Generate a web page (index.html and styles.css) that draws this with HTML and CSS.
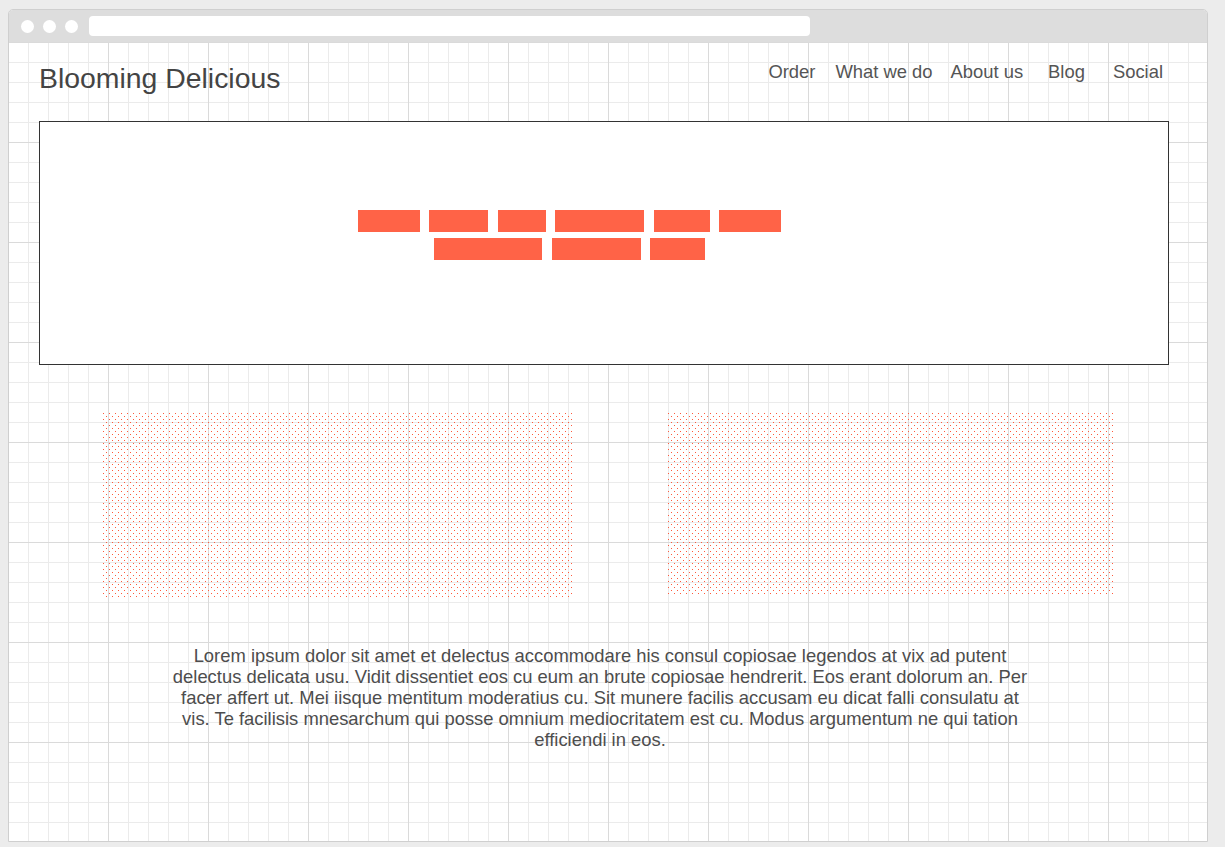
FILE: index.html
```html
<!DOCTYPE html>
<html lang="en">
<head>
<meta charset="utf-8">
<title>Blooming Delicious</title>
<link rel="stylesheet" href="styles.css">
</head>
<body>
<div class="window">
  <div class="chrome">
    <span class="light"></span>
    <span class="light"></span>
    <span class="light"></span>
    <div class="address"></div>
  </div>
  <div class="page">
    <header class="header">
      <h1 class="logo">Blooming Delicious</h1>
      <nav class="nav">
        <a class="nav-link" href="#">Order</a>
        <a class="nav-link" href="#">What we do</a>
        <a class="nav-link nav-about" href="#">About us</a>
        <a class="nav-link nav-blog" href="#">Blog</a>
        <a class="nav-link nav-social" href="#">Social</a>
      </nav>
    </header>

    <section class="hero">
      <div class="words">
        <div class="word-row">
          <span class="word" style="width:62px"></span>
          <span class="word" style="width:59px"></span>
          <span class="word" style="width:48px"></span>
          <span class="word" style="width:89px"></span>
          <span class="word" style="width:56px"></span>
          <span class="word" style="width:62px"></span>
        </div>
        <div class="word-row">
          <span class="word" style="width:108px"></span>
          <span class="word" style="width:89px"></span>
          <span class="word" style="width:55px"></span>
        </div>
      </div>
    </section>

    <section class="features">
      <div class="pattern pattern-left"></div>
      <div class="pattern pattern-right"></div>
    </section>

    <p class="intro">Lorem ipsum dolor sit amet et delectus accommodare his consul copiosae legendos at vix ad putent delectus delicata usu. Vidit dissentiet eos cu eum an brute copiosae hendrerit. Eos erant dolorum an. Per facer affert ut. Mei iisque mentitum moderatius cu. Sit munere facilis accusam eu dicat falli consulatu at vis. Te facilisis mnesarchum qui posse omnium mediocritatem est cu. Modus argumentum ne qui tation efficiendi in eos.</p>
  </div>
</div>
</body>
</html>
```

FILE: styles.css
```css
* {
  box-sizing: border-box;
}

html, body {
  margin: 0;
  padding: 0;
}

body {
  background: #ececec;
  font-family: "Liberation Sans", Arial, sans-serif;
  color: #444;
  height: 847px;
  overflow: hidden;
}

.window {
  margin: 9px 0 0 8px;
  width: 1200px;
  border: 1px solid #cfcfcf;
  border-radius: 5px 5px 0 0;
  background: #fff;
  overflow: hidden;
}

.chrome {
  height: 32px;
  background: #dddddd;
  display: flex;
  align-items: center;
  padding-left: 12px;
  gap: 9px;
}

.light {
  width: 13px;
  height: 13px;
  border-radius: 50%;
  background: #fff;
  flex: none;
}

.address {
  margin-left: 2px;
  width: 721px;
  height: 20px;
  background: #fff;
  border-radius: 4px;
}

.page {
  height: 799px;
  padding: 20px 38px 0 30px;
  background-color: #fff;
  background-image:
    linear-gradient(90deg, #dadada 1px, transparent 1px),
    linear-gradient(#dadada 1px, transparent 1px),
    linear-gradient(90deg, #ebebeb 1px, transparent 1px),
    linear-gradient(#ebebeb 1px, transparent 1px);
  background-size: 100px 100px, 100px 100px, 20px 20px, 20px 20px;
  background-position: -1px 0, -1px 0, -1px 0, -1px 0;
}

.header {
  display: flex;
  justify-content: space-between;
  align-items: flex-start;
}

.logo {
  margin: 0;
  font-size: 28.4px;
  line-height: 32px;
  font-weight: normal;
  color: #444;
}

.nav {
  display: flex;
  padding-right: 6px;
  margin-top: -1px;
}

.nav-link {
  font-size: 18.4px;
  line-height: 22px;
  color: #555;
  text-decoration: none;
}

.nav-link + .nav-link {
  margin-left: 20px;
}

.nav-link.nav-about {
  margin-left: 18px;
}

.nav-link.nav-blog {
  margin-left: 25px;
}

.nav-link.nav-social {
  margin-left: 28px;
}

.hero {
  margin-top: 27px;
  height: 244px;
  border: 1px solid #333;
  background: #fff;
  display: flex;
  flex-direction: column;
  align-items: center;
  padding: 88px 69px 0 0;
}

.words {
  display: flex;
  flex-direction: column;
  align-items: center;
  gap: 6px;
}

.word-row {
  display: flex;
  gap: 9.5px;
}

.word {
  display: block;
  height: 22px;
  background: #ff6347;
}

.features {
  display: flex;
  align-items: flex-start;
  margin-top: 48px;
  padding-left: 64px;
  gap: 95px;
}

.pattern {
  background-image:
    conic-gradient(at 1px 1px, transparent 75%, #ff5a3c 0),
    conic-gradient(at 1px 1px, transparent 75%, #ff5a3c 0);
  background-size: 6px 6px, 6px 6px;
  background-position: 0 0, 3px 3px;
}

.pattern-left {
  width: 470px;
  height: 185px;
}

.pattern-right {
  width: 445px;
  height: 182px;
}

.intro {
  margin: 47px 0 0 129px;
  width: 864px;
  font-size: 18.4px;
  line-height: 21px;
  text-align: center;
  color: #4d4d4d;
}
```
